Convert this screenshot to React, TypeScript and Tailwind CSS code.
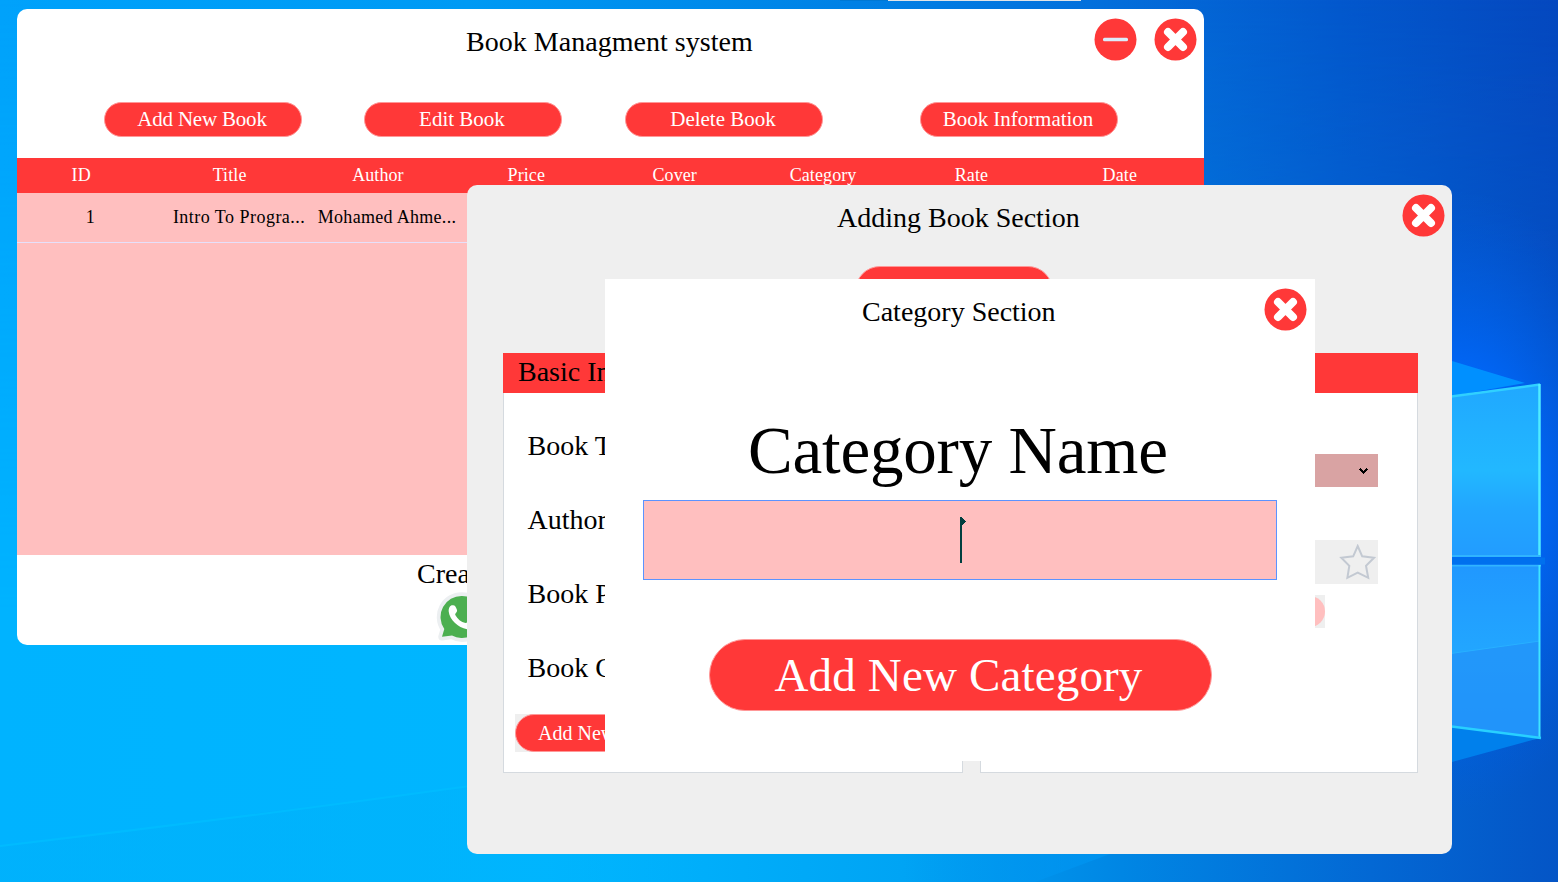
import type { ReactNode } from "react";

const SERIF = "font-['Liberation_Serif','Times_New_Roman',serif]";

function Wallpaper() {
  return (
    <svg className="absolute inset-0" width="1558" height="882" viewBox="0 0 1558 882">
      <defs>
        <linearGradient id="top" x1="0" x2="1" y1="0" y2="0">
          <stop offset="0" stopColor="#00a2fb" />
          <stop offset="0.3" stopColor="#009af4" />
          <stop offset="0.5" stopColor="#0086e8" />
          <stop offset="0.7" stopColor="#0470dc" />
          <stop offset="0.86" stopColor="#0358cd" />
          <stop offset="1" stopColor="#0548bf" />
        </linearGradient>
        <linearGradient id="bottom" x1="0" x2="1" y1="0" y2="0">
          <stop offset="0" stopColor="#00b3ff" />
          <stop offset="0.35" stopColor="#00b6ff" />
          <stop offset="0.58" stopColor="#00a4f4" />
          <stop offset="0.72" stopColor="#0086e4" />
          <stop offset="0.88" stopColor="#0368d4" />
          <stop offset="1" stopColor="#0455c6" />
        </linearGradient>
        <linearGradient id="fade" x1="0" x2="0" y1="0" y2="1">
          <stop offset="0" stopColor="#fff" stopOpacity="0" />
          <stop offset="0.7" stopColor="#fff" />
        </linearGradient>
        <mask id="fadeMask">
          <rect width="1558" height="882" fill="url(#fade)" />
        </mask>
        <radialGradient id="glow" gradientUnits="userSpaceOnUse" cx="1460" cy="500" r="310" gradientTransform="translate(1460 0) scale(0.58 1) translate(-1460 0)">
          <stop offset="0" stopColor="#0070ff" />
          <stop offset="0.4" stopColor="#0068fc" stopOpacity="0.9" />
          <stop offset="0.7" stopColor="#0062f0" stopOpacity="0.45" />
          <stop offset="1" stopColor="#0058e0" stopOpacity="0" />
        </radialGradient>
        <linearGradient id="streak" gradientUnits="userSpaceOnUse" x1="900" x2="1100" y1="0" y2="0">
          <stop offset="0" stopColor="#0098f4" stopOpacity="0" />
          <stop offset="1" stopColor="#0098f4" stopOpacity="0.6" />
        </linearGradient>
        <linearGradient id="floor" gradientUnits="userSpaceOnUse" x1="0" x2="700" y1="0" y2="0">
          <stop offset="0" stopColor="#00b0fa" stopOpacity="0.5" />
          <stop offset="0.6" stopColor="#00b2fa" stopOpacity="0.5" />
          <stop offset="1" stopColor="#00b2fa" stopOpacity="0" />
        </linearGradient>
        <linearGradient id="paneTop" x1="0" x2="0" y1="0" y2="1">
          <stop offset="0" stopColor="#20a8ff" />
          <stop offset="0.5" stopColor="#22b8ff" />
          <stop offset="0.72" stopColor="#22a6ff" />
          <stop offset="1" stopColor="#229cff" />
        </linearGradient>
        <linearGradient id="paneBottom" x1="0" x2="0" y1="0" y2="1">
          <stop offset="0" stopColor="#2098ff" />
          <stop offset="0.5" stopColor="#22a6ff" />
          <stop offset="1" stopColor="#2098ff" />
        </linearGradient>
      </defs>
      <rect width="1558" height="882" fill="url(#top)" />
      <rect width="1558" height="882" fill="url(#bottom)" mask="url(#fadeMask)" />
      <rect x="1200" width="358" height="882" fill="url(#glow)" />
      <path d="M0 846 L470 786 L700 757 V882 H0Z" fill="url(#floor)" />
      <path d="M0 846 Q 240 818 470 786" stroke="#00bbff" strokeWidth="2" fill="none" />
      <path d="M1452 361 L1525 383 L1452 396Z" fill="#0090ff" />
      <path d="M1452 726 L1540 738 L1452 762Z" fill="#0080ec" />
      <path d="M1035 882 L1110 854 H900 V882Z" fill="url(#streak)" />
      <path d="M1440 398 L1540 384 V557 H1440Z" fill="url(#paneTop)" />
      <path d="M1440 565 H1540 V738 L1440 725Z" fill="url(#paneBottom)" />
      <path d="M1440 655 L1540 641 V738 L1440 725Z" fill="#2292f8" opacity="0.7" />
      <path d="M1440 655 L1540 641" stroke="#28b0ff" />
      <path d="M1440 398 L1540 384.500" stroke="#30d0ff" strokeWidth="2.500" />
      <path d="M1539.500 384 V556" stroke="#50ecff" strokeWidth="2.500" />
      <path d="M1440 556 H1541" stroke="#30b4ff" strokeWidth="2" />
      <path d="M1440 565.500 H1541" stroke="#30b4ff" strokeWidth="2" />
      <path d="M1539.500 565 V738" stroke="#40e4ff" strokeWidth="2" />
      <path d="M1440 725 L1541 738" stroke="#28d0ff" strokeWidth="2.500" />
      <path d="M1440 561 H1545" stroke="#0070ee" strokeWidth="7" />
      <rect x="840" width="48" height="1" fill="#0078d4" />
      <rect x="888" width="193" height="1" fill="#e0e4e8" />
    </svg>
  );
}

function CloseIcon() {
  return (
    <svg width="43" height="43" viewBox="0 0 43 43" className="block">
      <circle cx="21.500" cy="21.500" r="21" fill="#ff3838" />
      <path d="M14 14 L29 29 M29 14 L14 29" stroke="#fff" strokeWidth="8" strokeLinecap="round" />
    </svg>
  );
}

function MinimizeIcon() {
  return (
    <svg width="43" height="43" viewBox="0 0 43 43" className="block">
      <circle cx="21.500" cy="21.500" r="21" fill="#ff3838" />
      <rect x="9" y="19.800" width="25" height="3.400" rx="1.500" fill="#dcebfa" />
    </svg>
  );
}

function WhatsAppIcon() {
  const bubble = "M27 4 A21 21 0 1 1 17 43.400 L7 44.800 L9.300 37 A21 21 0 0 1 27 4Z";
  return (
    <svg width="50" height="50" viewBox="0 0 50 50" className="block">
      <path d={bubble} fill="#eceff1" stroke="#eceff1" strokeWidth="7.500" strokeLinejoin="round" />
      <path d={bubble} fill="#4caf50" />
      <path d="M17.500 13.300 C20 13 20.800 14.500 22 18 C22.600 20 19.800 21.500 20.300 23 C22.500 27 26 30 30.500 31 C32.500 31 33 28 34.500 28.500 L40 31.500 C40 35.500 37 37.800 32 37.300 C23 35.500 14.500 27.500 13.700 19.500 C13.500 16 15 13.300 17.500 13.300Z" fill="#fff" />
    </svg>
  );
}

function ToolbarButton({ children }: { children: ReactNode }) {
  return (
    <button className="h-[35px] w-[198px] rounded-[17.5px] border border-[#ff9898] bg-[#ff3838] pr-[2px] text-[21px] leading-[33px] text-white">
      {children}
    </button>
  );
}

const COLUMNS = ["ID", "Title", "Author", "Price", "Cover", "Category", "Rate", "Date"];

function LibraryWindow() {
  return (
    <section className="absolute left-[17px] top-[9px] flex h-[636px] w-[1187px] flex-col overflow-hidden rounded-[10px] bg-white">
      <header className="flex h-[93px] shrink-0 items-start">
        <h1 className="ml-[449px] mt-[17px] w-[628px] whitespace-nowrap text-[28px] leading-8 tracking-[0.03px]">Book Managment system</h1>
        <div className="mt-[9px] flex gap-[17px]">
          <MinimizeIcon />
          <CloseIcon />
        </div>
      </header>
      <nav className="flex h-[56px] shrink-0 items-start pl-[87px]">
        <ToolbarButton><span className="tracking-[-0.2px]">Add New Book</span></ToolbarButton>
        <div className="w-[62px]" />
        <ToolbarButton>Edit Book</ToolbarButton>
        <div className="w-[63px]" />
        <ToolbarButton>Delete Book</ToolbarButton>
        <div className="w-[97px]" />
        <ToolbarButton><span className="tracking-[-0.05px]">Book Information</span></ToolbarButton>
      </nav>
      <div className="grid h-[35px] shrink-0 grid-cols-8 bg-[#ff3838] text-[18px] leading-[34px] text-white">
        {COLUMNS.map((c) => (
          <div key={c} className="pr-[20px] text-center tracking-[0.1px]">{c}</div>
        ))}
      </div>
      <div className="h-[362px] shrink-0 bg-[#ffbfbf]">
        <div className="grid h-[50px] grid-cols-8 border-b border-[#e6e0fa] text-[18px] leading-[49px]">
          <div className="pr-[2px] text-center">1</div>
          <div className="pl-[7.5px] tracking-[0.47px] whitespace-nowrap">Intro To Progra...</div>
          <div className="pl-[4px] tracking-[0.3px] whitespace-nowrap">Mohamed Ahme...</div>
        </div>
      </div>
      <footer className="pl-[400px]">
        <p className="h-[37px] pt-[3px] text-[28px] leading-8">Created By</p>
        <div className="pl-[18px]"><WhatsAppIcon /></div>
      </footer>
    </section>
  );
}

const FIELDS = ["Book Title", "Author", "Book Price", "Book Cover"];

function AddBookWindow() {
  return (
    <section className="absolute left-[467px] top-[185px] flex h-[669px] w-[985px] flex-col overflow-hidden rounded-[10px] bg-[#efefef]">
      <header className="flex h-[81px] shrink-0 items-start">
        <h2 className="ml-[370px] mt-[17px] w-[565px] text-[28px] leading-8">Adding Book Section</h2>
        <div className="mt-[9px]"><CloseIcon /></div>
      </header>
      <div className="h-[87px] shrink-0 pl-[388px]">
        <div className="h-[50px] w-[198px] rounded-[25px] border border-[#ff9898] bg-[#ff3838]" />
      </div>
      <div className="flex h-[420px] shrink-0 gap-[17px] pl-[36px]">
        <div className="flex w-[460px] flex-col">
          <h3 className="h-[40px] bg-[#ff3838] pl-[15px] text-[28px] leading-[38px]">Basic Information</h3>
          <div className="flex flex-1 flex-col border border-t-0 border-[#d5dadf] bg-white pt-[16px]">
            {FIELDS.map((f) => (
              <label key={f} className="block h-[74px] pl-[23.5px] text-[28px] leading-[74px]">{f}</label>
            ))}
            <div className="ml-[11px] mt-[9px] h-[38px] w-[198px] bg-[#efefef]">
              <button className="h-[38px] w-[198px] rounded-[19px] border border-[#ff9898] bg-[#ff3838] pl-[22px] text-left text-[20px] leading-[36px] text-white">Add New Cover</button>
            </div>
          </div>
        </div>
        <div className="flex w-[438px] flex-col">
          <div className="h-[40px] bg-[#ff3838]" />
          <div className="flex flex-1 flex-col items-end border border-t-0 border-[#d5dadf] bg-white pr-[39px] pt-[61px]">
            <div className="flex h-[33px] w-[220px] items-center justify-end bg-[#d9a3a3] pr-[10px]">
              <svg width="9" height="6" viewBox="0 0 9 6" shapeRendering="crispEdges" className="mt-[1px]">
                <path d="M1 0h1v1h1v1h1v1h1v-1h1v-1h1v-1h1v1h1v1h-1v1h-1v1h-1v1h-1v1h-1v-1h-1v-1h-1v-1h-1v-1h-1v-1h1z" fill="#000" />
              </svg>
            </div>
            <div className="mt-[53px] flex h-[44px] w-[220px] items-center justify-end bg-[#efefef] pr-[2px]">
              <svg width="37" height="36" viewBox="0 0 37 36">
                <path d="M18.700 2 L23.200 12.300 L35 13.800 L27 21.800 L29.200 33.800 L18.700 28.500 L8.400 33.800 L10.300 21.800 L2.300 13.800 L14.200 12.300Z" fill="none" stroke="#c3c9d2" strokeWidth="2" />
              </svg>
            </div>
            <div className="mr-[53px] mt-[11px] h-[33px] w-[140px] bg-[#efefef] py-[1px]">
              <div className="h-[31px] rounded-[15.500px] bg-[#ffbfbf]" />
            </div>
          </div>
        </div>
      </div>
    </section>
  );
}

function CategoryDialog() {
  return (
    <section className="absolute left-[605px] top-[279px] flex h-[482px] w-[710px] flex-col bg-white">
      <header className="flex h-[131px] shrink-0 items-start">
        <h2 className="ml-[257px] mt-[17px] w-[402px] text-[28px] leading-8">Category Section</h2>
        <div className="mt-[9px]"><CloseIcon /></div>
      </header>
      <label className="h-[90px] shrink-0 pl-[143px] text-[67px] leading-[80px] tracking-[-0.2px]">Category Name</label>
      <div className="ml-[38px] flex h-[80px] w-[634px] shrink-0 border border-[#5b93ff] bg-[#ffbfbf] pl-[316px] pt-[16px]">
        <svg width="6" height="46" viewBox="0 0 6 46" shapeRendering="crispEdges">
          <path d="M0 0H1L6 4.500L2 8V46H0Z" fill="#004040" />
        </svg>
      </div>
      <button className="ml-[104px] mt-[59px] h-[72px] w-[503px] shrink-0 rounded-[36px] border border-[#ff9898] bg-[#ff3838] pr-[4px] text-[47px] leading-[70px] tracking-[0.16px] text-white">
        Add New Category
      </button>
    </section>
  );
}

export default function App() {
  return (
    <main className={`relative h-[882px] w-[1558px] overflow-hidden bg-[#0098f0] text-black ${SERIF}`}>
      <Wallpaper />
      <LibraryWindow />
      <AddBookWindow />
      <CategoryDialog />
    </main>
  );
}
